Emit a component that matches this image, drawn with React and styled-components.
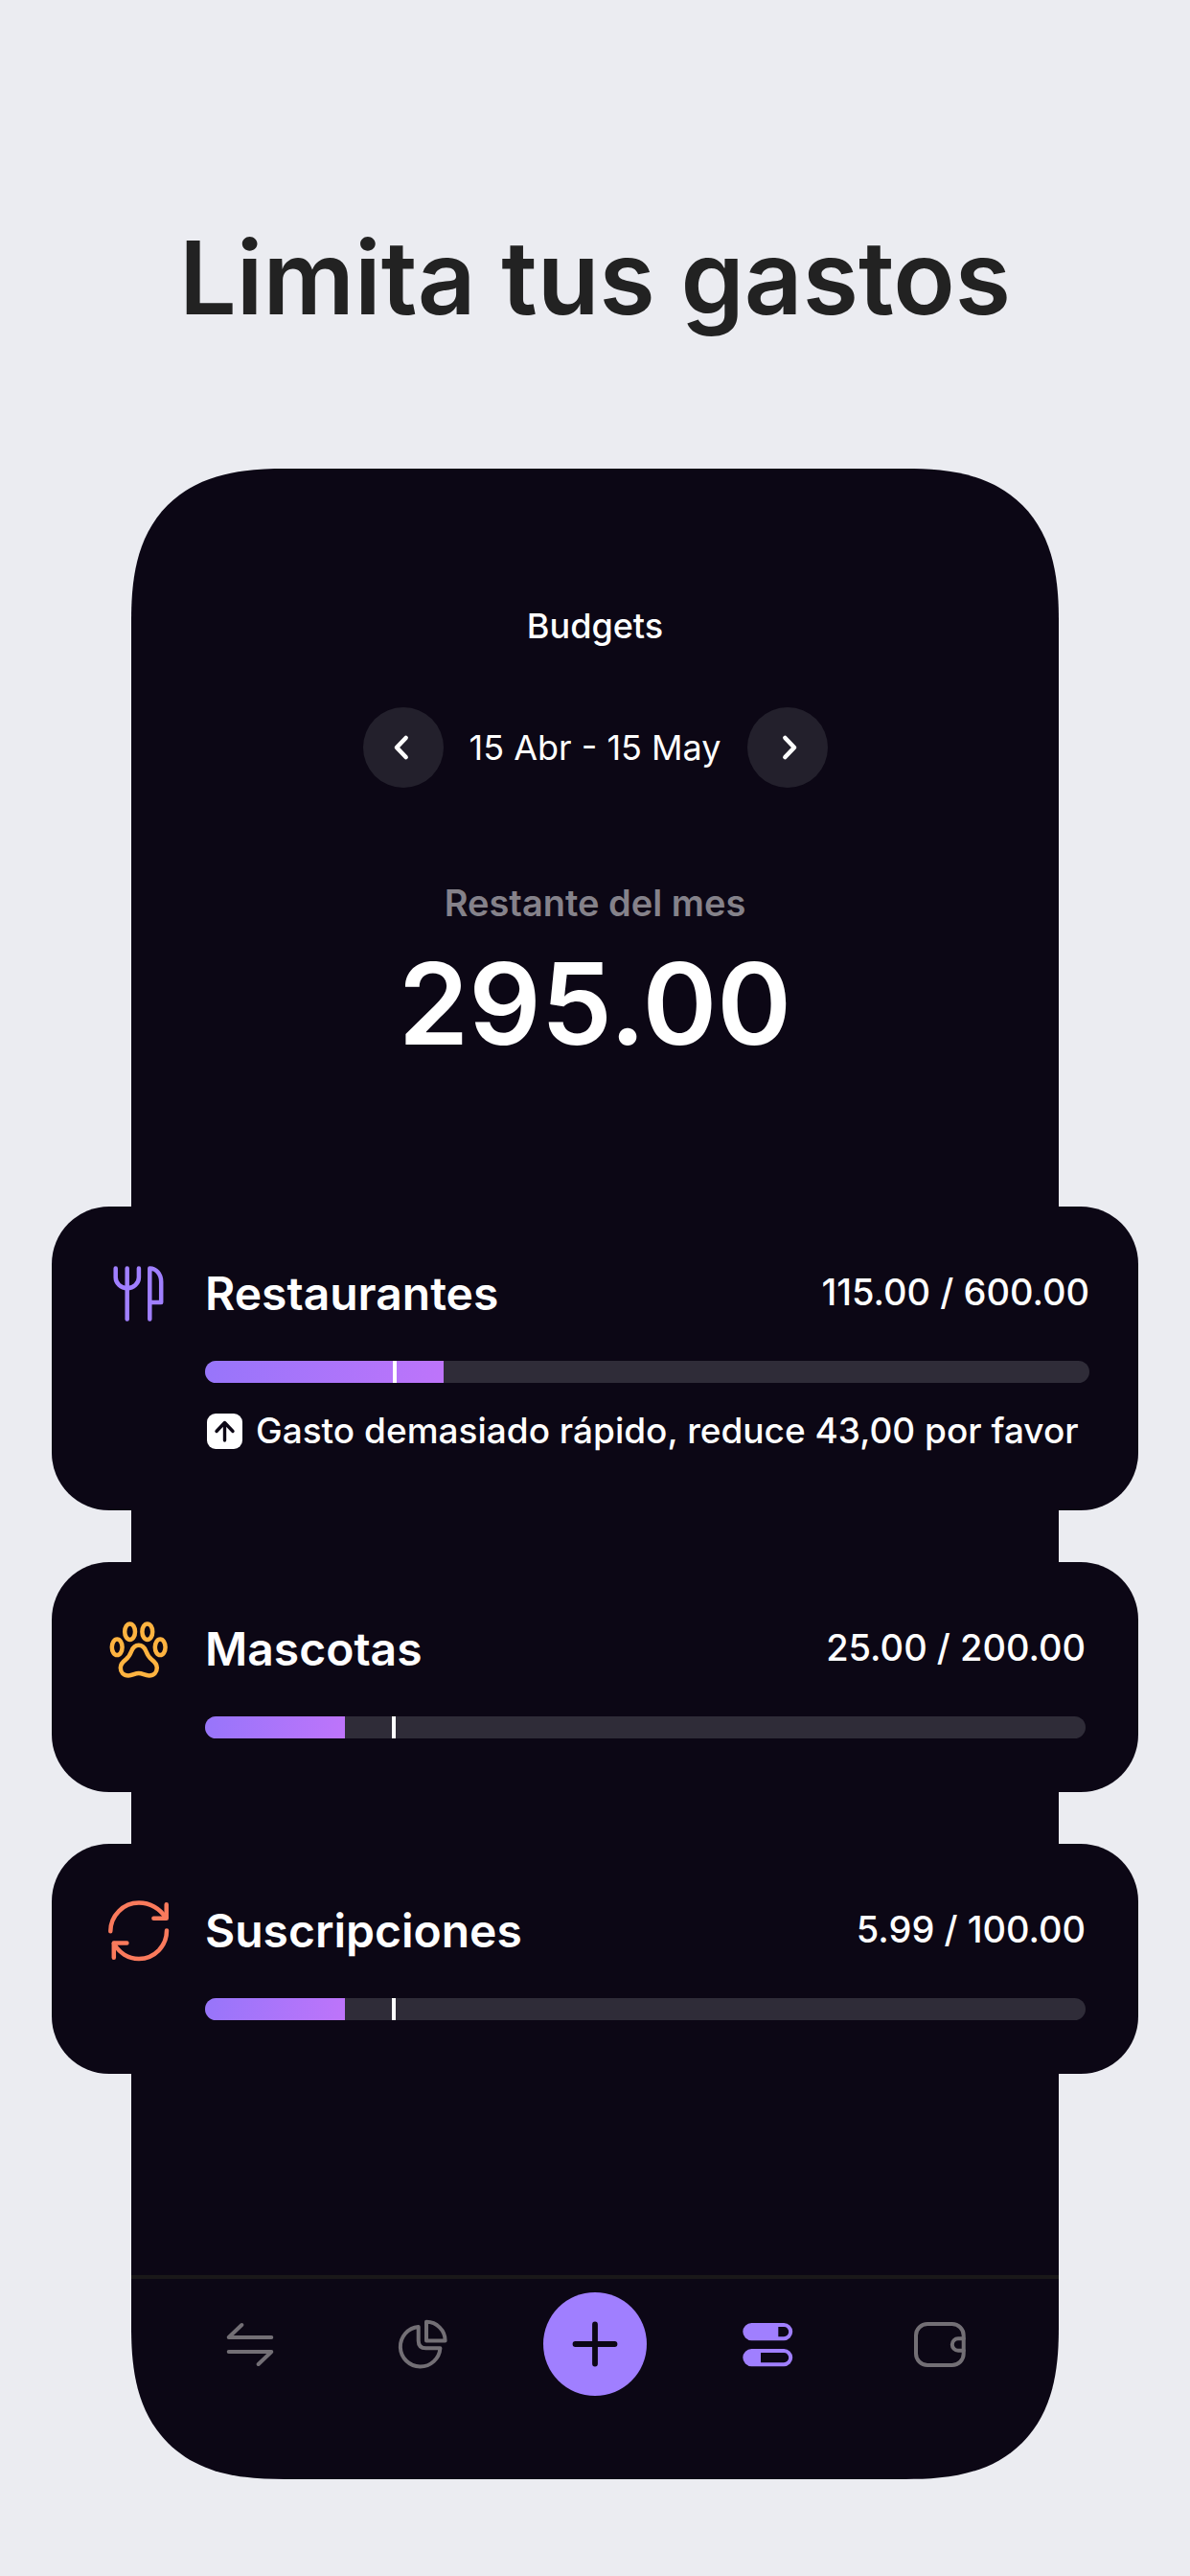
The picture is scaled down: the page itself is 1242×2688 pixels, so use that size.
import React from "react";
import styled, { createGlobalStyle } from "styled-components";

const color = {
  page: "#ebecf1",
  ink: "#222222",
  night: "#0c0715",
  white: "#ffffff",
  muted: "#85828a",
  idle: "#736f75",
  accent: "#a07fff",
  track: "#2f2c38",
  control: "#23202c",
  rule: "#1a1819",
};

const GlobalStyle = createGlobalStyle`
  *, *::before, *::after { box-sizing: border-box; }
  body {
    margin: 0;
    background: ${color.page};
    font-family: Inter, "Liberation Sans", sans-serif;
    -webkit-font-smoothing: antialiased;
  }
  h1, h2, h3, p, ul { margin: 0; padding: 0; }
  button { border: 0; padding: 0; font: inherit; cursor: pointer; }
`;

const Page = styled.main`
  display: flex;
  flex-direction: column;
  min-height: 100vh;
  padding: 220px 54px 101px;
`;

const Headline = styled.h1`
  margin-bottom: 129px;
  color: ${color.ink};
  font-size: 106px;
  font-weight: 600;
  line-height: 140px;
  text-align: center;
`;

const Phone = styled.section`
  display: flex;
  flex-direction: column;
  margin: 0 83px;
  padding-top: 144px;
  border-radius: 144px;
  background: ${color.night};
  color: ${color.white};

  @supports (corner-shape: superellipse(1.35)) {
    border-radius: 160px;
    corner-shape: superellipse(1.35);
  }
`;

const ScreenTitle = styled.h2`
  font-size: 36px;
  font-weight: 500;
  line-height: 40px;
  text-align: center;
`;

const Period = styled.div`
  display: flex;
  align-items: center;
  justify-content: center;
  gap: 27px;
  margin-top: 65px;
`;

const PeriodLabel = styled.span`
  font-size: 36px;
  line-height: 40px;
`;

const RoundButton = styled.button`
  width: 84px;
  height: 84px;
  border-radius: 50%;
  background: ${color.control};
  color: ${color.white};
`;

const Summary = styled.div`
  display: flex;
  flex-direction: column;
  align-items: center;
  gap: 25px;
  margin-top: 96px;
`;

const SummaryLabel = styled.p`
  color: ${color.muted};
  font-size: 38px;
  font-weight: 600;
  line-height: 48px;
`;

const SummaryValue = styled.p`
  font-size: 118px;
  font-weight: 600;
  line-height: 112px;
`;

const BudgetList = styled.ul`
  display: flex;
  flex-direction: column;
  gap: 54px;
  margin: 156px -83px 0;
  list-style: none;
`;

const BudgetCard = styled.li`
  display: grid;
  grid-template-columns: 64px 1fr;
  column-gap: 37px;
  padding: ${(p) => (p.$alert ? "59px 51px 63px 59px" : "59px 55px 56px 59px")};
  border-radius: 60px;
  background: ${color.night};
`;

const BudgetIcon = styled.svg`
  width: 64px;
  height: 64px;
  fill: none;
  stroke: ${(p) => p.$color};
  stroke-width: 4.5;
  stroke-linecap: round;
  stroke-linejoin: round;
`;

const BudgetBody = styled.div`
  display: flex;
  flex-direction: column;
`;

const BudgetHeader = styled.div`
  display: flex;
  align-items: center;
  justify-content: space-between;
  height: 64px;
`;

const BudgetName = styled.h3`
  font-size: 48px;
  font-weight: 600;
  line-height: 64px;
`;

const BudgetAmount = styled.span`
  font-size: 38px;
  font-weight: 500;
  line-height: 60px;
  padding-bottom: 4px;
`;

const Track = styled.div`
  position: relative;
  height: 23px;
  margin-top: 38px;
  overflow: hidden;
  border-radius: 12px;
  background: ${color.track};
`;

const Fill = styled.div`
  height: 100%;
  background: linear-gradient(100deg, #9775fa, #be74fa);
`;

const Marker = styled.span`
  position: absolute;
  top: 0;
  bottom: 0;
  width: 4px;
  background: ${color.white};
`;

const Note = styled.p`
  display: flex;
  align-items: center;
  gap: 14px;
  margin-top: 30px;
  padding-left: 2px;
  font-size: 37px;
  font-weight: 500;
  line-height: 40px;
  white-space: nowrap;
`;

const NoteIcon = styled.svg`
  flex: none;
  width: 37px;
  height: 37px;
`;

const TabBar = styled.nav`
  display: grid;
  grid-template-columns: repeat(5, 1fr);
  align-items: center;
  justify-items: center;
  margin-top: 210px;
  padding: 14px 34px 87px;
  border-top: 4px solid ${color.rule};
`;

const Tab = styled.a`
  display: flex;
  color: ${(p) => (p.$active ? color.accent : color.idle)};
`;

const TabIcon = styled.svg`
  width: 60px;
  height: 60px;
  fill: none;
  stroke: currentColor;
  stroke-width: 4;
  stroke-linecap: round;
  stroke-linejoin: round;
`;

const AddButton = styled.button`
  width: 108px;
  height: 108px;
  border-radius: 50%;
  background: ${color.accent};
  color: ${color.night};
`;

const LineIcon = styled.svg`
  display: block;
  width: 100%;
  height: 100%;
  fill: none;
  stroke: currentColor;
  stroke-width: ${(p) => p.$weight};
  stroke-linecap: round;
  stroke-linejoin: round;
`;

const cutlery = (
  <>
    <path d="M7.7 5.5V15a11.9 11 0 0 0 24.2 0V5.5" />
    <path d="M19.7 5.5V58.5" />
    <path d="M43.3 58.5V5.5C50 5.5 55.2 11.5 55.2 19.5V41H43.3" />
  </>
);

const paw = (
  <>
    <ellipse cx="22.6" cy="13.7" rx="5.4" ry="8.3" />
    <ellipse cx="40.8" cy="13.7" rx="5.4" ry="8.3" />
    <ellipse cx="9.2" cy="29.8" rx="5.4" ry="8.3" />
    <ellipse cx="54.2" cy="29.8" rx="5.4" ry="8.3" />
    <path d="M31.8 27.8C27.6 27.8 25.6 30.4 24.2 34C22.8 37.6 21.2 40.4 18.4 42.6C15.2 45 12.8 47.2 12.8 51.2C12.8 56 16 59.4 21 59.4C25.6 59.4 27.6 57 31.8 57C36 57 38 59.4 42.6 59.4C47.6 59.4 50.8 56 50.8 51.2C50.8 47.2 48.4 45 45.2 42.6C42.4 40.4 40.8 37.6 39.4 34C38 30.4 36 27.8 31.8 27.8Z" />
  </>
);

const renew = (
  <>
    <path d="M2.3 32.3A29.7 29.7 0 0 1 32 2.6C43.6 2.6 54 8.6 60 18.2" />
    <path d="M60.7 4.2V18.7H47.4" />
    <path d="M61 31.6A29.2 29.4 0 0 1 32 61C20.6 61 11 54.6 6 45" />
    <path d="M19.4 44.5H5.8V59.8" />
  </>
);

const budgets = [
  { name: "Restaurantes", amount: "115.00 / 600.00", icon: cutlery, tint: "#a07fff", fill: 27, marker: 21.2,
    note: "Gasto demasiado rápido, reduce 43,00 por favor" },
  { name: "Mascotas", amount: "25.00 / 200.00", icon: paw, tint: "#ffb340", fill: 15.9, marker: 21.2 },
  { name: "Suscripciones", amount: "5.99 / 100.00", icon: renew, tint: "#fa7a5c", fill: 15.9, marker: 21.2 },
];

function Budget({ name, amount, icon, tint, fill, marker, note }) {
  return (
    <BudgetCard $alert={Boolean(note)}>
      <BudgetIcon viewBox="0 0 64 64" $color={tint} aria-hidden="true">{icon}</BudgetIcon>
      <BudgetBody>
        <BudgetHeader>
          <BudgetName>{name}</BudgetName>
          <BudgetAmount>{amount}</BudgetAmount>
        </BudgetHeader>
        <Track role="progressbar" aria-label={name} aria-valuenow={fill} aria-valuemin={0} aria-valuemax={100}>
          <Fill style={{ width: `${fill}%` }} />
          <Marker style={{ left: `${marker}%` }} />
        </Track>
        {note && (
          <Note>
            <NoteIcon viewBox="0 0 37 37" aria-hidden="true">
              <rect width="37" height="37" rx="9" fill={color.white} />
              <path d="M18.5 28V10M10 18.5L18.5 9.5L27 18.5" fill="none" stroke={color.night} strokeWidth="3.4" strokeLinecap="round" strokeLinejoin="round" />
            </NoteIcon>
            {note}
          </Note>
        )}
      </BudgetBody>
    </BudgetCard>
  );
}

export default function App() {
  return (
    <>
      <GlobalStyle />
      <Page>
        <Headline>Limita tus gastos</Headline>
        <Phone>
          <ScreenTitle>Budgets</ScreenTitle>
          <Period>
            <RoundButton type="button" aria-label="Anterior">
              <LineIcon viewBox="0 0 84 84" $weight={4.6}><path d="M44.6 32L35 42L44.6 52" /></LineIcon>
            </RoundButton>
            <PeriodLabel>15 Abr - 15 May</PeriodLabel>
            <RoundButton type="button" aria-label="Siguiente">
              <LineIcon viewBox="0 0 84 84" $weight={4.6}><path d="M39.4 32L49 42L39.4 52" /></LineIcon>
            </RoundButton>
          </Period>
          <Summary>
            <SummaryLabel>Restante del mes</SummaryLabel>
            <SummaryValue>295.00</SummaryValue>
          </Summary>
          <BudgetList>
            {budgets.map((b) => <Budget key={b.name} {...b} />)}
          </BudgetList>
          <TabBar>
            <Tab href="#movimientos" aria-label="Movimientos">
              <TabIcon viewBox="0 0 60 60">
                <path d="M52.3 23H7.7L21.3 10" />
                <path d="M7.7 38H52.3L38.7 51" />
              </TabIcon>
            </Tab>
            <Tab href="#informes" aria-label="Informes">
              <TabIcon viewBox="0 0 60 60">
                <path d="M34 6.8V26.4H53.6A19.6 19.6 0 0 0 34 6.8Z" />
                <path d="M25.7 12V26.5Q25.7 34.3 33.5 34.3H48.4A20.8 20.8 0 1 1 25.7 12Z" />
              </TabIcon>
            </Tab>
            <AddButton type="button" aria-label="Añadir">
              <LineIcon viewBox="0 0 108 108" $weight={5.8}><path d="M54 33.5V74.5M33.5 54H74.5" /></LineIcon>
            </AddButton>
            <Tab href="#presupuestos" aria-label="Presupuestos" aria-current="page" $active>
              <TabIcon viewBox="0 0 60 60">
                <rect x="6.3" y="10" width="47.9" height="14.2" rx="7.1" />
                <path d="M13.4 10H41.3V24.2H13.4A7.1 7.1 0 0 1 13.4 10Z" fill="currentColor" stroke="none" />
                <rect x="6.3" y="37" width="47.9" height="14.2" rx="7.1" />
                <path d="M13.4 37H23V51.2H13.4A7.1 7.1 0 0 1 13.4 37Z" fill="currentColor" stroke="none" />
              </TabIcon>
            </Tab>
            <Tab href="#cuentas" aria-label="Cuentas">
              <TabIcon viewBox="0 0 60 60">
                <rect x="5" y="9" width="49.7" height="43" rx="12" />
                <path d="M54.7 24.3H49A6.2 6.2 0 0 0 49 36.7H54.7" />
              </TabIcon>
            </Tab>
          </TabBar>
        </Phone>
      </Page>
    </>
  );
}
